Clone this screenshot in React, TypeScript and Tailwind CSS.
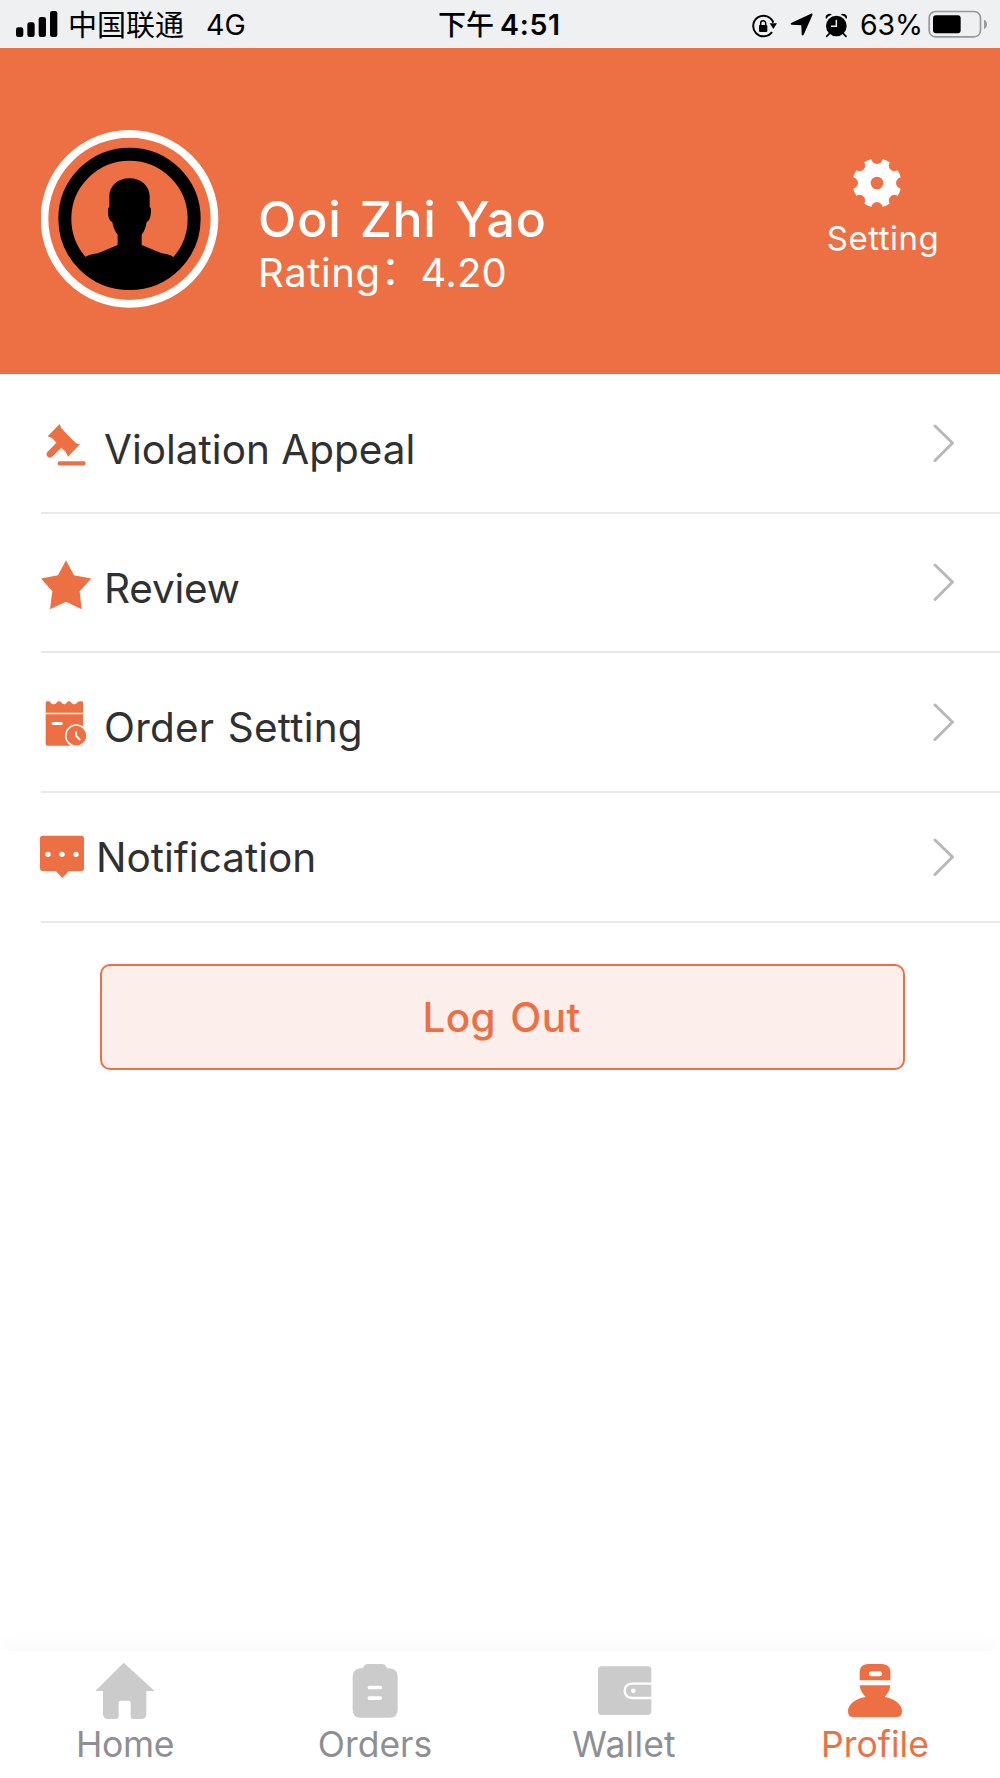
import type { ReactNode } from 'react'

const GEAR_NOTCHES = [0, 45, 90, 135, 180, 225, 270, 315]

function StatusBar() {
  return (
    <div className="flex h-12 shrink-0 bg-[#eff0f2] font-['Inter','Noto_Sans_CJK_SC',sans-serif] text-black">
      <div className="flex w-[400px] items-center pl-4">
        <svg className="h-[26px] w-[42px]" viewBox="48 33 126 78">
          <rect x="48" y="82" width="22" height="29" rx="7" />
          <rect x="82" y="67" width="22" height="44" rx="7" />
          <rect x="116" y="51" width="22" height="60" rx="7" />
          <rect x="150" y="33" width="22" height="78" rx="7" />
        </svg>
        <span className="ml-2.5 pt-0.5 text-[29px] leading-none whitespace-nowrap">中国联通</span>
        <span className="ml-[22px] pt-[3px] text-[28.500px] leading-none">4G</span>
      </div>
      <div className="flex w-[200px] items-center pl-[38px] leading-none">
        <span className="pt-0.5 text-[28px] font-medium whitespace-nowrap">下午</span>
        <span className="ml-1.5 pt-[3px] text-[28.500px] font-semibold tracking-[0.7px]">4:51</span>
      </div>
      <div className="flex w-[400px] items-center pl-[151px]">
        <svg className="mt-1 h-[26px] w-[27px]" viewBox="63 37 81 78">
          <path d="M126 94A31 31 0 1 1 130 66" fill="none" stroke="#000" strokeWidth="6" />
          <path d="M119 68L141 68L130 85Z" />
          <rect x="87" y="73" width="25" height="21" rx="3" />
          <path d="M92 75V68a7.500 7.500 0 0 1 15 0V75" fill="none" stroke="#000" strokeWidth="4.500" />
        </svg>
        <svg className="ml-3 mt-0.5 h-6 w-6" viewBox="182 40 72 72">
          <path d="M245 42Q251 41 249 47L223 105Q219 111 217 104L216 77L187 75Q180 73 187 69Z" />
        </svg>
        <svg className="ml-[11px] mt-0.5 h-[25px] w-[23px]" viewBox="286 37 69 75">
          <circle cx="320" cy="76" r="31" />
          <path d="M288 53Q286 39 302 39L307 42Q294 45 291 54ZM352 53Q354 39 338 39L333 42Q346 45 349 54Z" />
          <path d="M299 99L291 107M341 99L349 107" stroke="#000" strokeWidth="5" strokeLinecap="round" />
          <path d="M320 57V77H304" fill="none" stroke="#eff0f2" strokeWidth="4.500" />
        </svg>
        <span className="ml-3 pt-[3px] text-[28.500px] leading-none tracking-[-0.2px]">63%</span>
        <svg className="ml-auto mr-[11px] h-7 w-[61px]" viewBox="594 29 183 84">
          <rect x="597.500" y="33.500" width="154" height="76" rx="19" fill="none" stroke="#98999b" strokeWidth="5" />
          <rect x="609" y="45" width="83" height="54" rx="9" />
          <path d="M762 58Q771 62 771 72T762 87Z" fill="#98999b" />
        </svg>
      </div>
    </div>
  )
}

function Header() {
  return (
    <header className="flex h-[326px] shrink-0 bg-[#ed7044] pl-[41px] text-white">
      <svg className="mt-[82px] h-[178px] w-[178px]" viewBox="34.500 29 533 534">
        <circle cx="299.500" cy="295.500" r="255" fill="none" stroke="#fff" strokeWidth="23" />
        <circle cx="299.500" cy="295.500" r="194" fill="none" stroke="#000" strokeWidth="39" />
        <path
          d="M299 174C335 174 360 198 360 228V259Q365 261 364 275Q362 302 351 305Q347 330 336 343V374L396 399Q420 401 432 411L455 430A205 205 0 0 1 144 430L165 411Q180 401 205 399L264 374V343Q252 330 248 305Q236 302 235 275Q234 261 239 259V228C239 198 263 174 299 174Z"
          fill="#000"
        />
      </svg>
      <div className="ml-[39px] mt-[144px] w-[400px] whitespace-nowrap">
        <h1 className="text-[50px] font-medium leading-[54px] tracking-[0.8px] [word-spacing:4px]">Ooi Zhi Yao</h1>
        <p className="mt-[3px] flex text-[40px] leading-[48px]">
          <span className="tracking-[0.6px]">Rating</span>
          <span className="-mt-1.5 font-['Noto_Sans_CJK_SC',sans-serif]">：</span>
          <span className="tracking-[0.2px]">4.20</span>
        </p>
      </div>
      <div className="ml-[163px] mt-[111px] flex w-[124px] flex-col items-center">
        <svg className="-ml-3 h-12 w-12" viewBox="160 58.500 144 144">
          <mask id="gear">
            <circle cx="232" cy="130.500" r="73" fill="#fff" />
            <circle cx="232" cy="130.500" r="19" fill="#000" />
            {GEAR_NOTCHES.map((angle) => (
              <circle key={angle} cx="232" cy="56.500" r="17" fill="#000" transform={`rotate(${angle} 232 130.500)`} />
            ))}
          </mask>
          <rect x="150" y="50" width="164" height="164" fill="#fff" mask="url(#gear)" />
        </svg>
        <span className="mt-[11px] text-[33px] leading-[40px] tracking-[0.5px]">Setting</span>
      </div>
    </header>
  )
}

function Row({ icon, viewBox, label, height, text }: { icon: ReactNode; viewBox: string; label: string; height: string; text: string }) {
  return (
    <>
      <div className={`flex items-center pl-9 pr-[45px] ${height}`}>
        <svg className="h-[52px] w-[52px] shrink-0 overflow-visible" viewBox={viewBox} fill="#ed7044">
          {icon}
        </svg>
        <span className={`text-[40.500px] leading-[48px] text-[#303030] ${text}`}>{label}</span>
        <svg className="ml-auto h-[39px] w-[22px]" viewBox="0 0 22 39" fill="none" stroke="#b8b8b8" strokeWidth="3" strokeLinecap="round" strokeLinejoin="round">
          <path d="M2 2L19.500 19L2 36.500" />
        </svg>
      </div>
      <div className="ml-[41px] h-0.5 bg-[#e9e9e9]" />
    </>
  )
}

function Tab({ viewBox, label, active, text = '', children }: { viewBox: string; label: string; active?: boolean; text?: string; children: ReactNode }) {
  return (
    <div className={`flex flex-1 flex-col items-center pt-2.5 ${active ? 'text-[#ed7044]' : 'text-[#8e8e93]'}`}>
      <svg className="h-[60px] w-[60px]" viewBox={viewBox} fill={active ? '#ed7044' : '#cbcbcb'}>
        {children}
      </svg>
      <span className={`mt-[3px] text-[35.500px] leading-[42px] ${text}`}>{label}</span>
    </div>
  )
}

export default function App() {
  return (
    <div className="flex h-[1778px] w-[1000px] flex-col overflow-hidden bg-white font-['Inter',sans-serif]">
      <StatusBar />
      <Header />
      <main>
        <Row
          label="Violation Appeal"
          height="h-[138px]"
          text="ml-4 mt-[13px]"
          viewBox="18 51 156 156"
          icon={
            <>
              <path d="M89 72L94 85L135 127Q141 133 150 133L114 170L107 155L94 143L68 169Q61 176 54 171Q46 165 52 156L79 128L67 115L53 109Z" />
              <rect x="83" y="183.500" width="84" height="13" rx="6" />
            </>
          }
        />
        <Row
          label="Review"
          height="h-[137px]"
          text="ml-4 mt-[13px] tracking-[-0.2px]"
          viewBox="18 469.500 156 156"
          icon={<polygon points="108,479 132,524 184,534 149,572 155,626 108,604 60,626 67,572 33,534 84,524" />}
        />
        <Row
          label="Order Setting"
          height="h-[138px]"
          text="ml-4 mt-[12px] tracking-[0.2px] [word-spacing:2px]"
          viewBox="18 48 156 156"
          icon={
            <>
              <path d="M47 98V68Q47 64 52 64H57Q59 64 62 68Q71 78 80 68Q84 61 93 66Q102 79 110 68Q117 60 124 68Q133 78 141 68Q145 63 155 64Q159 64 159 68V98Z" />
              <path d="M47 103H159V197H52Q47 197 47 192Z" />
              <rect x="65" y="126" width="33" height="9" rx="4" fill="#fff" />
              <circle cx="139" cy="167" r="34" fill="#fff" />
              <circle cx="139" cy="167" r="29.500" />
              <path d="M138 157V167L149 178" fill="none" stroke="#fff" strokeWidth="6" strokeLinecap="round" />
            </>
          }
        />
        <Row
          label="Notification"
          height="h-[128px]"
          text="ml-[8px] mt-[2px]"
          viewBox="18 453 156 156"
          icon={
            <>
              <path d="M38 467H154Q162 467 162 475V565Q162 573 154 573H117L97 594L77 573H38Q30 573 30 565V475Q30 467 38 467Z" />
              <g fill="#fff">
                <circle cx="54" cy="523" r="8" />
                <circle cx="96" cy="523" r="8" />
                <circle cx="138" cy="523" r="8" />
              </g>
            </>
          }
        />
        <button
          type="button"
          className="ml-[100px] mt-[41px] block h-[106px] w-[805px] rounded-[10px] border-2 border-[#ed7044] bg-[#fceeea] pt-0.5 pr-0.5 text-[40.500px] font-medium tracking-[0.4px] text-[#ed7044] [word-spacing:3px]"
        >
          Log Out
        </button>
      </main>
      <nav className="mt-auto flex h-[127px] shrink-0 bg-white shadow-[0_-2px_24px_rgba(0,0,0,0.04)]">
        <Tab label="Home" viewBox="165 93 180 180" text="tracking-[-0.4px]">
          <path d="M251 98L344 183H319V252Q319 267 304 267H280Q272 267 272 259V217Q272 212 267 212H241Q236 212 236 217V259Q236 267 228 267H204Q189 267 189 252V183H166Z" />
        </Tab>
        <Tab label="Orders" viewBox="915 93 180 180">
          <path d="M985 102H1025Q1037 102 1041 115H1048Q1073 117 1073 140V239Q1073 263 1049 263H961Q938 263 938 239V140Q938 117 963 115H968Q973 102 985 102Z" />
          <rect x="983" y="167" width="43" height="11" rx="5" fill="#fff" />
          <rect x="983" y="199" width="43" height="11" rx="5" fill="#fff" />
        </Tab>
        <Tab label="Wallet" viewBox="165 93 180 180" text="-ml-0.5 tracking-[0.2px]">
          <rect x="174" y="109" width="160" height="146" rx="11" />
          <path d="M336 161H276Q254 163 254 182.500T276 204H336" fill="none" stroke="#fff" strokeWidth="7" />
          <circle cx="280" cy="182.500" r="7" fill="#fff" />
        </Tab>
        <Tab label="Profile" viewBox="915 93 180 180" active>
          <path d="M983 102H1027Q1051 103 1051 127V151H959V127Q959 103 983 102Z" />
          <rect x="987" y="124" width="39" height="15" rx="7.500" fill="#fff" />
          <path d="M959 166H1051Q1050 184 1034 201C1065 206 1086 225 1086 243Q1086 261 1071 261H939Q924 261 924 243C924 225 945 206 977 201Q960 184 959 166Z" />
        </Tab>
      </nav>
    </div>
  )
}
